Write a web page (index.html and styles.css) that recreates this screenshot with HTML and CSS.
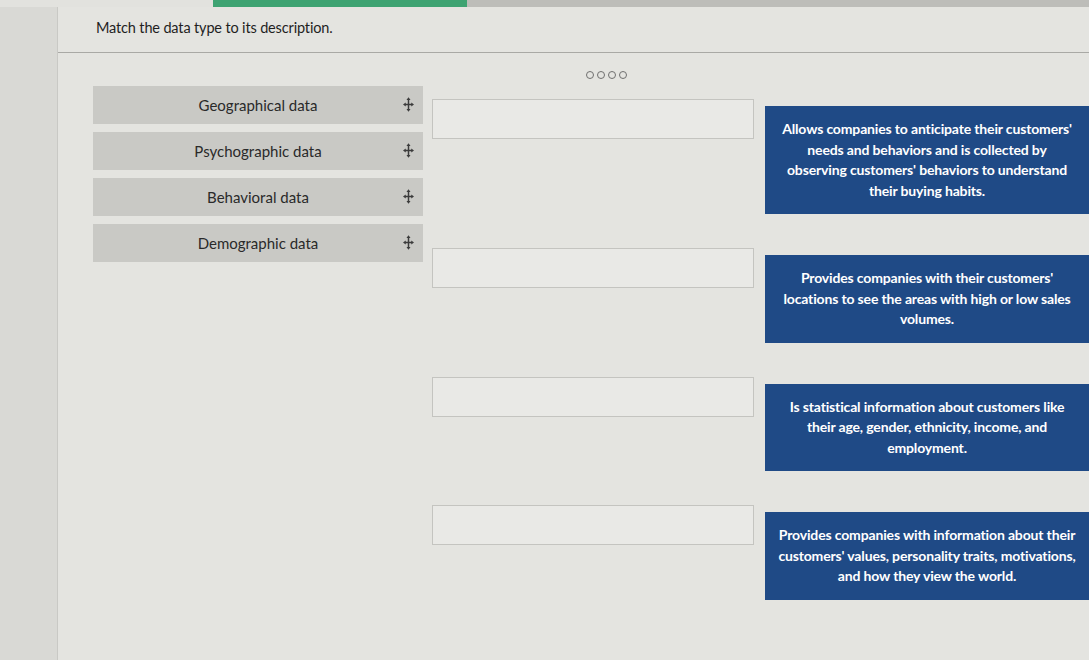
FILE: index.html
```html
<!DOCTYPE html>
<html lang="en">
<head>
<meta charset="utf-8">
<title>Match the data type</title>
<link rel="stylesheet" href="styles.css">
</head>
<body>
<div class="screen">
  <div class="topbar">
    <div class="topbar-blank"></div>
    <div class="progress-done"></div>
    <div class="progress-rest"></div>
  </div>
  <div class="page">
    <aside class="rail"></aside>
    <main class="content">
      <h1 class="prompt">Match the data type to its description.</h1>
      <div class="divider"></div>
      <div class="pager">
        <span class="dot"></span><span class="dot"></span><span class="dot"></span><span class="dot"></span>
      </div>
      <div class="match">
        <ul class="sources">
          <li class="source"><span class="source-label">Geographical data</span><svg class="move" viewBox="0 0 12 16"><path d="M6 2V14M2 8H10"/><path class="head" d="M6 0L3.8 3.2H8.2ZM6 16L3.8 12.8H8.2ZM0 8L3 5.8V10.2ZM12 8L9 5.8V10.2Z"/></svg></li>
          <li class="source"><span class="source-label">Psychographic data</span><svg class="move" viewBox="0 0 12 16"><path d="M6 2V14M2 8H10"/><path class="head" d="M6 0L3.8 3.2H8.2ZM6 16L3.8 12.8H8.2ZM0 8L3 5.8V10.2ZM12 8L9 5.8V10.2Z"/></svg></li>
          <li class="source"><span class="source-label">Behavioral data</span><svg class="move" viewBox="0 0 12 16"><path d="M6 2V14M2 8H10"/><path class="head" d="M6 0L3.8 3.2H8.2ZM6 16L3.8 12.8H8.2ZM0 8L3 5.8V10.2ZM12 8L9 5.8V10.2Z"/></svg></li>
          <li class="source"><span class="source-label">Demographic data</span><svg class="move" viewBox="0 0 12 16"><path d="M6 2V14M2 8H10"/><path class="head" d="M6 0L3.8 3.2H8.2ZM6 16L3.8 12.8H8.2ZM0 8L3 5.8V10.2ZM12 8L9 5.8V10.2Z"/></svg></li>
        </ul>
        <div class="targets">
          <div class="pair">
            <div class="slot"></div>
            <p class="desc">Allows companies to anticipate their customers'<br>needs and behaviors and is collected by<br>observing customers' behaviors to understand<br>their buying habits.</p>
          </div>
          <div class="pair">
            <div class="slot"></div>
            <p class="desc">Provides companies with their customers'<br>locations to see the areas with high or low sales<br>volumes.</p>
          </div>
          <div class="pair">
            <div class="slot"></div>
            <p class="desc">Is statistical information about customers like<br>their age, gender, ethnicity, income, and<br>employment.</p>
          </div>
          <div class="pair">
            <div class="slot"></div>
            <p class="desc">Provides companies with information about their<br>customers' values, personality traits, motivations,<br>and how they view the world.</p>
          </div>
        </div>
      </div>
    </main>
  </div>
</div>
</body>
</html>
```
FILE: styles.css
```css
html, body {
  margin: 0;
  padding: 0;
}

body {
  width: 1089px;
  height: 660px;
  overflow: hidden;
  background: #e4e4e0;
  font-family: Lato, "Open Sans", sans-serif;
  color: #2a2a2a;
}

.screen {
  display: flex;
  flex-direction: column;
  height: 660px;
}

/* progress strip along the top edge */
.topbar {
  display: flex;
  height: 7px;
  flex: none;
}

.topbar-blank {
  width: 213px;
  background: #e2e2de;
}

.progress-done {
  width: 254px;
  background: #3ea372;
}

.progress-rest {
  flex: 1;
  background: #bdbdb9;
}

.page {
  flex: 1;
  display: flex;
}

.rail {
  width: 57px;
  flex: none;
  background: #d9d9d5;
  border-right: 1px solid #c9c9c5;
}

.content {
  flex: 1;
  display: flex;
  flex-direction: column;
}

.prompt {
  margin: 11px 0 0 38px;
  font-size: 14.5px;
  font-weight: 400;
  line-height: 20px;
  color: #1f1f1f;
  letter-spacing: -0.15px;
}

.divider {
  margin-top: 14px;
  height: 1px;
  background: #a9a9a5;
}

.pager {
  display: flex;
  gap: 3px;
  margin: 18px 0 0 528px;
  height: 8px;
}

.dot {
  width: 6px;
  height: 6px;
  border: 1px solid #6f6f6f;
  border-radius: 50%;
}

.match {
  display: flex;
  align-items: flex-start;
  margin-top: 7px;
  margin-left: 35px;
}

.sources {
  list-style: none;
  margin: 0;
  padding: 0;
  width: 330px;
  display: flex;
  flex-direction: column;
  gap: 8px;
}

.source {
  position: relative;
  height: 38px;
  display: flex;
  align-items: center;
  justify-content: center;
  background: #c9c9c5;
  font-size: 15px;
}

.source-label {
  color: #2a2a2a;
}

/* four-way drag handle */
.move {
  position: absolute;
  right: 9px;
  top: 11px;
  width: 11px;
  height: 15px;
}

.move path {
  stroke: #3c3c3c;
  stroke-width: 1.6;
  fill: none;
}

.move path.head {
  stroke: none;
  fill: #3c3c3c;
}

.targets {
  margin-left: 9px;
  margin-top: 13px;
  display: flex;
  flex-direction: column;
  gap: 34px;
}

.pair {
  display: flex;
  align-items: flex-start;
  gap: 11px;
}

.slot {
  width: 320px;
  height: 38px;
  flex: none;
  background: #e9e9e6;
  border: 1px solid #c4c4c0;
}

.desc {
  margin: 7px 0 0 0;
  width: 324px;
  box-sizing: border-box;
  padding: 13px 4px;
  background: #1f4a86;
  color: #ffffff;
  font-size: 14px;
  font-weight: 700;
  line-height: 20.5px;
  letter-spacing: -0.15px;
  text-align: center;
}
```
